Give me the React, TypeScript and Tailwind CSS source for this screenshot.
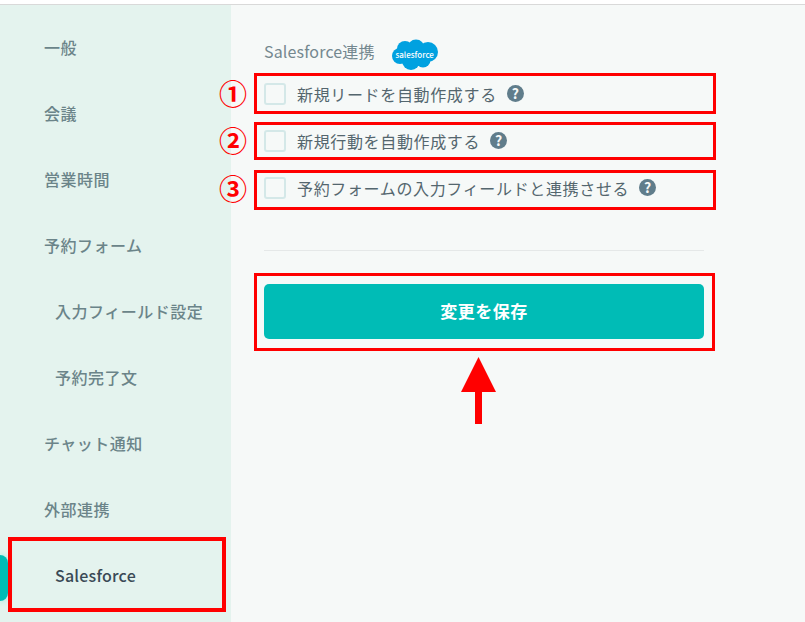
const navItems = [
  { label: "一般", sub: false },
  { label: "会議", sub: false },
  { label: "営業時間", sub: false },
  { label: "予約フォーム", sub: false },
  { label: "入力フィールド設定", sub: true },
  { label: "予約完了文", sub: true },
  { label: "チャット通知", sub: false },
  { label: "外部連携", sub: false },
  { label: "Salesforce", sub: true, active: true },
]

const options = ["新規リードを自動作成する", "新規行動を自動作成する", "予約フォームの入力フィールドと連携させる"]

function SalesforceLogo() {
  return (
    <div className="relative mt-[6px] ml-4 h-[32px] w-[48px]">
      <svg viewBox="0 0 48 32" className="absolute inset-0 h-full w-full">
        <g fill="#00a1e0">
          <circle cx="14" cy="10" r="8" />
          <circle cx="25" cy="9" r="8.5" />
          <circle cx="37" cy="13" r="10" />
          <circle cx="9" cy="17" r="8" />
          <circle cx="20" cy="22" r="9" />
          <circle cx="32" cy="21" r="7.5" />
        </g>
      </svg>
      <span className="absolute inset-0 flex items-center justify-center text-[8px] leading-none font-medium tracking-normal text-white">
        salesforce
      </span>
    </div>
  )
}

function HelpIcon() {
  return (
    <span className="mb-[2px] ml-[10px] flex h-[17px] w-[17px] items-center justify-center rounded-full bg-[#607d8b] text-[14px] leading-none font-bold tracking-normal text-[#f6f9f8]">
      ?
    </span>
  )
}

function RedBox({ className }: { className: string }) {
  return <div className={`pointer-events-none absolute border-[3px] border-[#ff0000] ${className}`} />
}

function Badge({ n, className }: { n: string; className: string }) {
  return (
    <div
      className={`absolute flex h-[30px] w-[30px] items-center justify-center text-[28px] leading-none font-bold tracking-normal text-[#ff0000] ${className}`}
    >
      {n}
    </div>
  )
}

export default function App() {
  return (
    <div
      className="relative h-[622px] w-[805px] overflow-hidden bg-white tracking-[0.65px]"
      style={{ fontFamily: '"Noto Sans CJK JP", "Noto Sans", sans-serif' }}
    >
      <div className="h-[5px] border-b border-[#d9d9d9] bg-white" />
      <div className="flex h-[617px]">
        <aside className="relative w-[231px] shrink-0 bg-[#e4f3ee] pt-[9px]">
          {navItems.map((item) => (
            <div
              key={item.label}
              className={`flex h-[66px] items-center text-[16px] font-medium ${item.sub ? "pl-[55px]" : "pl-[44px]"} ${
                item.active ? "tracking-[0.2px] text-[#3a4a56]" : "tracking-[0.5px] text-[#6b8489]"
              }`}
            >
              {item.label}
            </div>
          ))}
          <div className="absolute top-[550px] left-0 h-[46px] w-[8px] rounded-r-lg bg-[#00bcb6] shadow-[0_0_6px_#8ee6e2]" />
        </aside>

        <main className="flex-1 bg-[#f6f9f8] pt-[31px] pl-[33px]">
          <div className="flex h-[32px] items-center text-[16px] tracking-[0.15px] text-[#74888f]">
            <span className="mb-[2px]">Salesforce連携</span>
            <SalesforceLogo />
          </div>
          <div className="mt-[15px] flex flex-col gap-[25px]">
            {options.map((text) => (
              <label key={text} className="flex h-[22px] items-center text-[16px] text-[#54666e]">
                <span className="mr-[11px] h-[22px] w-[22px] rounded-[3px] border-2 border-[#d4e8e8] bg-[#f6f9f8]" />
                {text}
                <HelpIcon />
              </label>
            ))}
          </div>
          <div className="mt-[51px] h-px w-[440px] bg-[#e5e8e8]" />
          <button className="mt-[33px] h-[55px] w-[440px] rounded-[5px] bg-[#00bcb6] pb-[2px] text-[17px] font-bold tracking-[0.5px] text-white">
            変更を保存
          </button>
        </main>
      </div>

      <RedBox className="top-[73px] left-[254px] h-[41px] w-[462px]" />
      <RedBox className="top-[122px] left-[254px] h-[38px] w-[462px]" />
      <RedBox className="top-[170px] left-[254px] h-[40px] w-[462px]" />
      <RedBox className="top-[273px] left-[254px] h-[78px] w-[461px]" />
      <RedBox className="top-[537px] left-[8px] h-[75px] w-[218px] border-[4px]" />

      <Badge n="①" className="top-[78px] left-[218px]" />
      <Badge n="②" className="top-[125px] left-[218px]" />
      <Badge n="③" className="top-[173px] left-[218px]" />

      <svg viewBox="0 0 35 68" className="absolute top-[357px] left-[461px] h-[68px] w-[35px]">
        <path d="M17.5 0 L35 35 H21 V67 H14 V35 H0 Z" fill="#ff0000" />
      </svg>
    </div>
  )
}
